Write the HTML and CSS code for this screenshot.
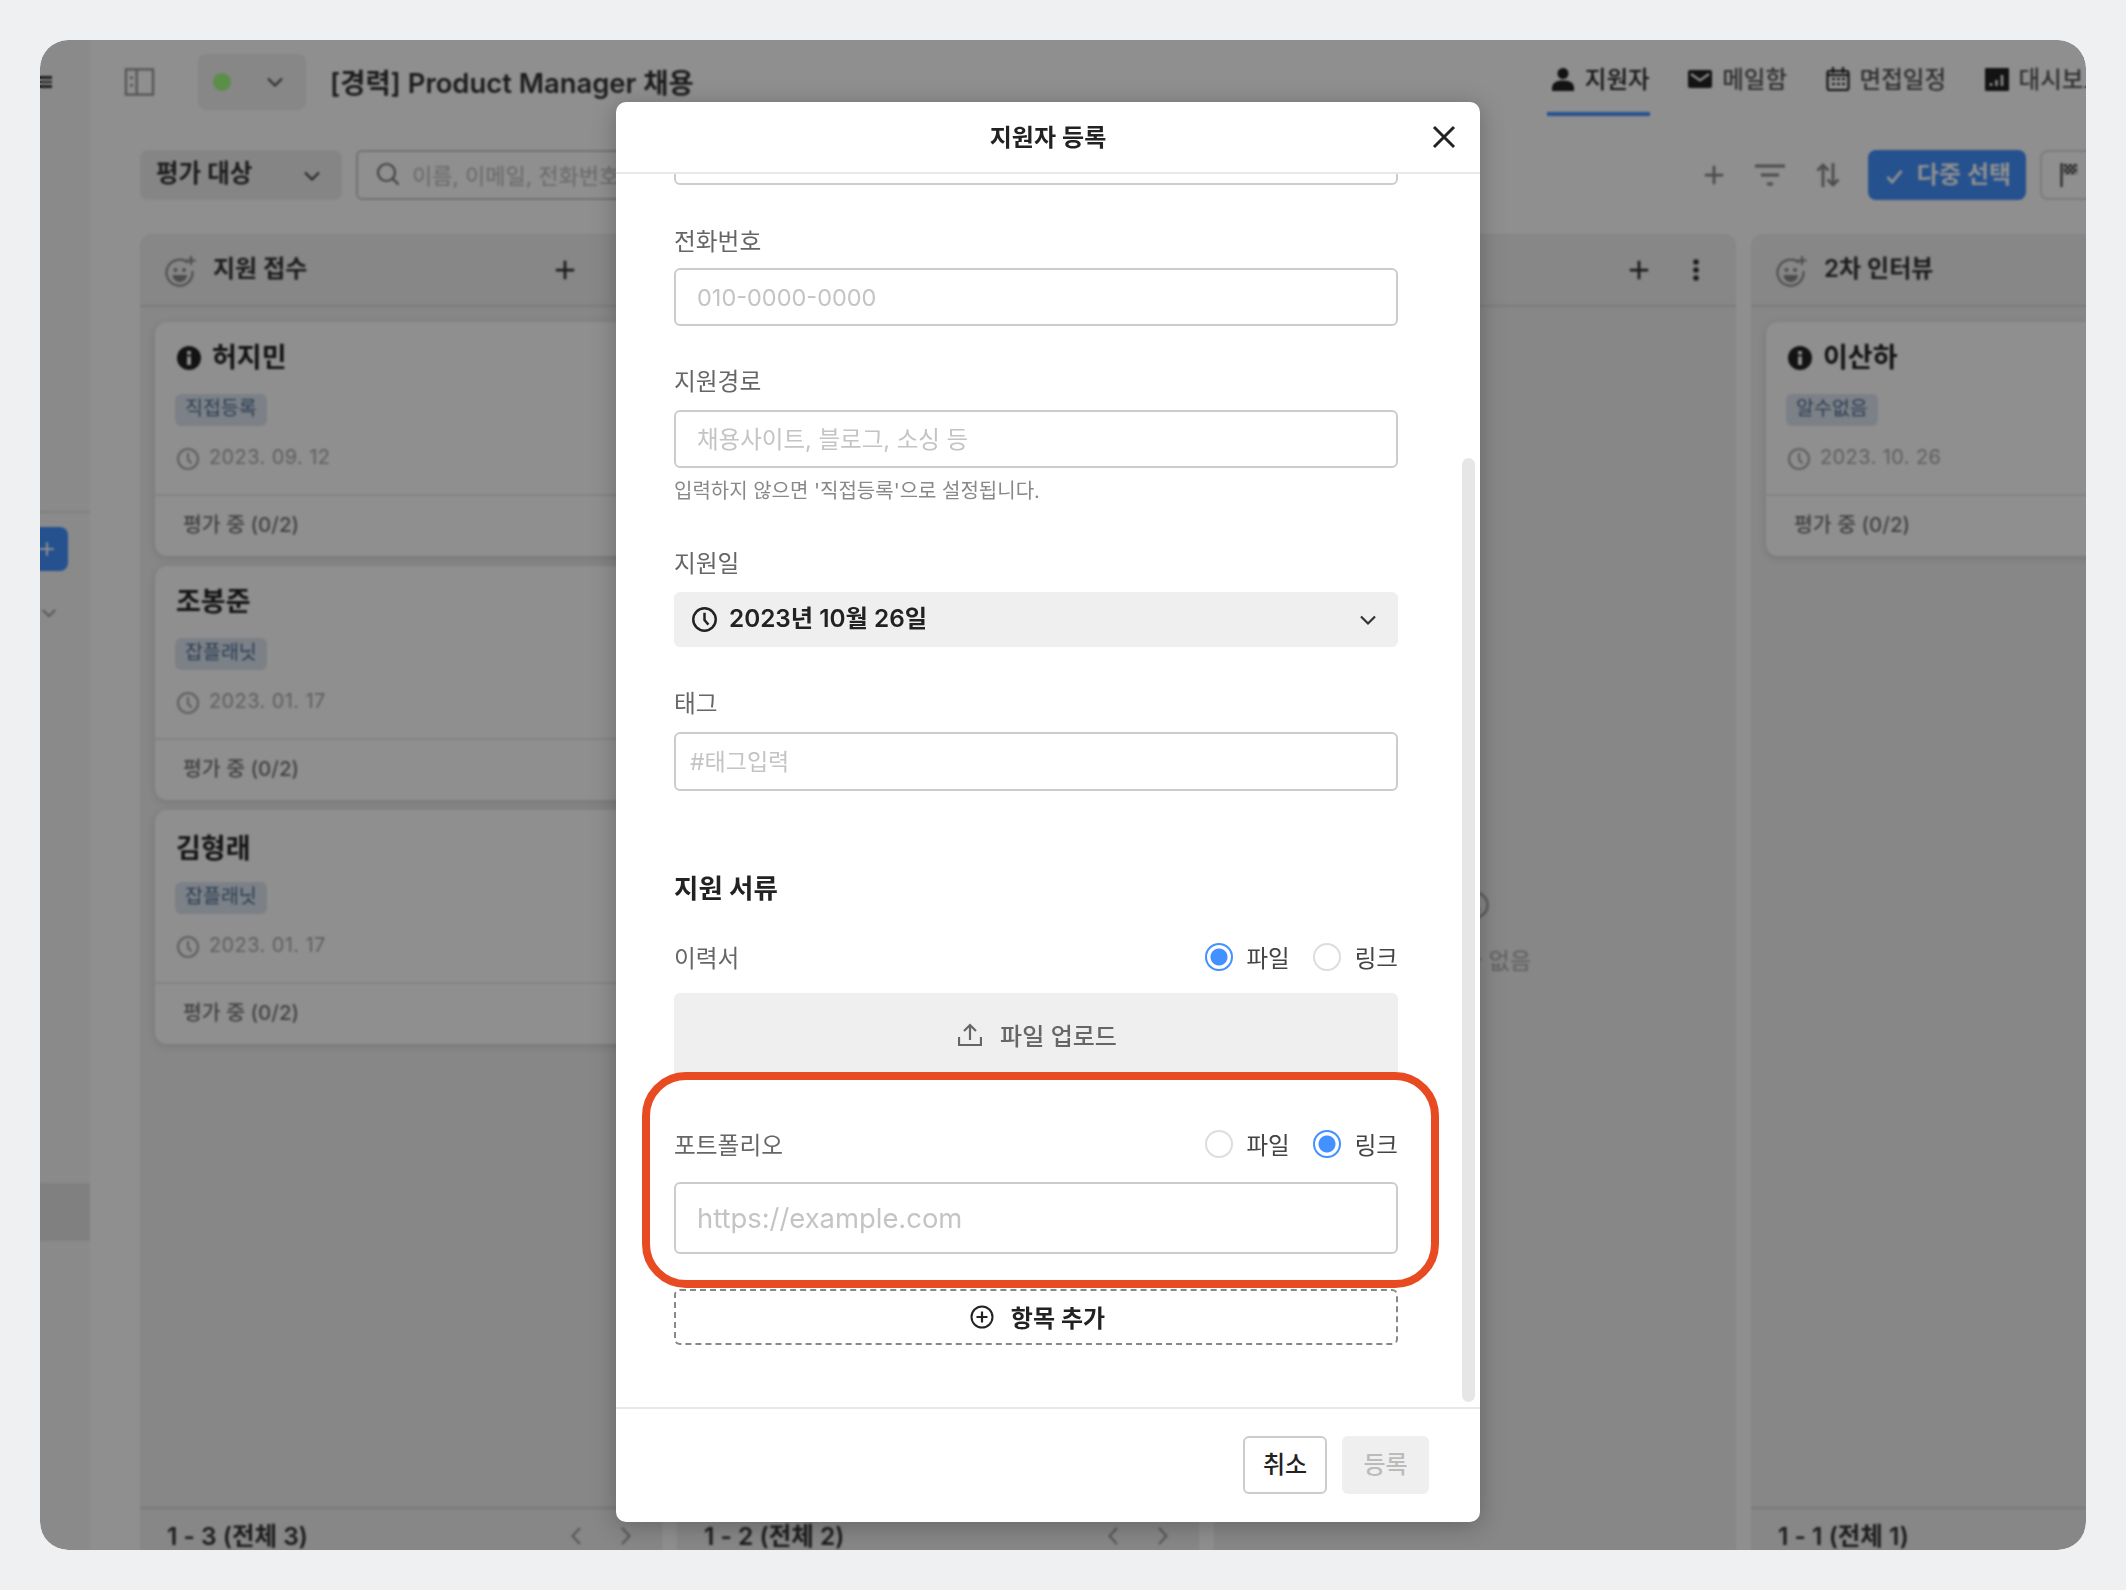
FILE: index.html
```html
<!DOCTYPE html>
<html lang="ko">
<head>
    <meta charset="UTF-8">
    <title>지원자 등록</title>
    <link rel="stylesheet" href="styles.css">
</head>
<body>
    <!-- icones reutilisees -->
    <svg class="sprite" width="0" height="0">
        <symbol id="i-chevron" viewBox="0 0 20 20"><path d="M3 6.500l7 7 7-7" fill="none" stroke="currentColor" stroke-width="2.200"/></symbol>
        <symbol id="i-plus" viewBox="0 0 24 24"><path d="M12 2v20M2 12h20" fill="none" stroke="currentColor" stroke-width="3"/></symbol>
        <symbol id="i-dots" viewBox="0 0 24 24"><circle cx="12" cy="4" r="2.800" fill="currentColor"/><circle cx="12" cy="12" r="2.800" fill="currentColor"/><circle cx="12" cy="20" r="2.800" fill="currentColor"/></symbol>
        <symbol id="i-clock" viewBox="0 0 24 24"><circle cx="12" cy="12" r="10" fill="none" stroke="currentColor" stroke-width="2.200"/><path d="M12 6v6.500l3.500 4" fill="none" stroke="currentColor" stroke-width="2.200"/></symbol>
        <symbol id="i-info" viewBox="0 0 24 24"><circle cx="12" cy="12" r="12" fill="currentColor"/><rect x="10" y="5" width="4" height="3.600" fill="#fff"/><rect x="10" y="10.400" width="4" height="8.600" fill="#fff"/></symbol>
        <symbol id="i-smile" viewBox="0 0 32 32"><path d="M24 6.800A13 13 0 1 0 28.400 15" fill="none" stroke="currentColor" stroke-width="2"/><circle cx="11.500" cy="14" r="2" fill="currentColor"/><circle cx="20" cy="14" r="2" fill="currentColor"/><path d="M8.500 19h14.500a7.200 7.200 0 0 1-14.500 0z" fill="currentColor"/><path d="M27 0v9M22.500 4.500h9" fill="none" stroke="currentColor" stroke-width="2"/></symbol>
        <symbol id="i-prev" viewBox="0 0 12 20"><path d="M10 2L2.500 10 10 18" fill="none" stroke="currentColor" stroke-width="2"/></symbol>
        <symbol id="i-next" viewBox="0 0 12 20"><path d="M2 2l7.500 8L2 18" fill="none" stroke="currentColor" stroke-width="2"/></symbol>
    </svg>

    <div class="window">
        <aside class="sidebar">
            <div class="menu-lines"></div>
            <div class="side-line"></div>
            <button class="side-add"><svg class="side-plus"><use href="#i-plus"/></svg></button>
            <svg class="side-chevron"><use href="#i-chevron"/></svg>
            <div class="side-active"></div>
        </aside>

        <main class="main">
            <div class="topbar">
                <svg class="panel-icon" viewBox="0 0 32 30">
                    <rect x="1.500" y="1.500" width="29" height="27" fill="none" stroke="currentColor" stroke-width="2.500"/>
                    <path d="M13 1.500v27" stroke="currentColor" stroke-width="2.500"/>
                    <rect x="6" y="9" width="3" height="3" fill="currentColor"/>
                    <rect x="6" y="17" width="3" height="3" fill="currentColor"/>
                </svg>
                <div class="status-pill">
                    <span class="status-dot"></span>
                    <svg class="pill-chevron"><use href="#i-chevron"/></svg>
                </div>
                <h1 class="job-title">[경력] Product Manager 채용</h1>
                <nav class="tabs">
                    <a class="tab tab-active">
                        <svg class="tab-icon" viewBox="0 0 24 24"><circle cx="12" cy="6.500" r="5.500" fill="currentColor"/><path d="M1 24v-3c0-5 4-7.500 11-7.500s11 2.500 11 7.500v3z" fill="currentColor"/></svg>
                        지원자
                    </a>
                    <a class="tab">
                        <svg class="tab-icon" viewBox="0 0 24 24"><rect y="3" width="24" height="18" rx="2" fill="currentColor"/><path d="M3 7l9 6.500L21 7" fill="none" stroke="#fff" stroke-width="2.200"/></svg>
                        메일함
                    </a>
                    <a class="tab">
                        <svg class="tab-icon" viewBox="0 0 24 24"><rect x="1.500" y="4" width="21" height="19" rx="2" fill="none" stroke="currentColor" stroke-width="2.200"/><path d="M7 0v6M17 0v6M1.500 8h21" stroke="currentColor" stroke-width="2.200"/><path d="M6 12h3M11 12h3M16 12h3M6 17h3M11 17h3M16 17h3" stroke="currentColor" stroke-width="2"/></svg>
                        면접일정
                    </a>
                    <a class="tab">
                        <svg class="tab-icon" viewBox="0 0 24 24"><rect y="1" width="24" height="23" rx="1" fill="currentColor"/><path d="M6 19v-3M11.500 19v-6M17 19V8" stroke="#fff" stroke-width="2.500"/></svg>
                        대시보드
                    </a>
                </nav>
            </div>

            <div class="toolbar">
                <div class="select-filter">평가 대상 <svg class="select-chevron"><use href="#i-chevron"/></svg></div>
                <div class="search-box">
                    <svg class="search-icon" viewBox="0 0 24 24"><circle cx="10.500" cy="10.500" r="8.500" fill="none" stroke="currentColor" stroke-width="2.200"/><path d="M16.500 16.500l6 6" stroke="currentColor" stroke-width="2.200"/></svg>
                    <span class="search-text">이름, 이메일, 전화번호</span>
                </div>
                <div class="tools">
                    <svg class="tool-plus"><use href="#i-plus"/></svg>
                    <svg class="tool-icon" viewBox="0 0 30 24"><path d="M0 3h30M6 12h18M12 21h6" stroke="currentColor" stroke-width="3.200"/></svg>
                    <svg class="tool-sort" viewBox="0 0 24 24"><path d="M7 24V2M1.500 7.500L7 2l5.500 5.500M17 0v22M11.500 16.500L17 22l5.500-5.500" fill="none" stroke="currentColor" stroke-width="2.800"/></svg>
                    <button class="btn-multi">
                        <svg class="check" viewBox="0 0 18 16"><path d="M1.500 8.500l5 5.500L16.500 2" fill="none" stroke="currentColor" stroke-width="3"/></svg>
                        다중 선택
                    </button>
                    <button class="btn-flag">
                        <svg class="flag" viewBox="0 0 18 24">
                            <path d="M1.500 0v24" stroke="currentColor" stroke-width="2"/>
                            <path d="M3 1h15v11H3z" fill="currentColor" opacity=".2"/>
                            <path d="M4 1h2.500v2.500H4zM9 1h2.500v2.500H9zM14 1h2.500v2.500H14zM6.500 3.500H9V6H6.500zM11.500 3.500H14V6h-2.500zM4 6h2.500v2.500H4zM9 6h2.500v2.500H9zM14 6h2.500v2.500H14zM6.500 8.500H9V11H6.500zM11.500 8.500H14V11h-2.500z" fill="currentColor"/>
                        </svg>
                    </button>
                </div>
            </div>

            <div class="board">
                <section class="column">
                    <header class="col-head">
                        <svg class="col-smile"><use href="#i-smile"/></svg>
                        <span class="col-title">지원 접수</span>
                        <svg class="col-plus"><use href="#i-plus"/></svg>
                        <svg class="col-dots"><use href="#i-dots"/></svg>
                    </header>
                    <div class="col-body">
                        <article class="card">
                            <div class="card-name"><svg class="info"><use href="#i-info"/></svg>허지민</div>
                            <span class="tag">직접등록</span>
                            <div class="card-date"><svg class="date-clock"><use href="#i-clock"/></svg>2023. 09. 12</div>
                            <div class="card-foot">평가 중 (0/2)</div>
                        </article>
                        <article class="card">
                            <div class="card-name">조봉준</div>
                            <span class="tag">잡플래닛</span>
                            <div class="card-date"><svg class="date-clock"><use href="#i-clock"/></svg>2023. 01. 17</div>
                            <div class="card-foot">평가 중 (0/2)</div>
                        </article>
                        <article class="card">
                            <div class="card-name">김형래</div>
                            <span class="tag">잡플래닛</span>
                            <div class="card-date"><svg class="date-clock"><use href="#i-clock"/></svg>2023. 01. 17</div>
                            <div class="card-foot">평가 중 (0/2)</div>
                        </article>
                    </div>
                    <footer class="col-foot">
                        <span>1 - 3 (전체 3)</span>
                        <svg class="pager"><use href="#i-prev"/></svg>
                        <svg class="pager"><use href="#i-next"/></svg>
                    </footer>
                </section>

                <section class="column">
                    <header class="col-head">
                        <svg class="col-plus"><use href="#i-plus"/></svg>
                        <svg class="col-dots"><use href="#i-dots"/></svg>
                    </header>
                    <div class="col-body"></div>
                    <footer class="col-foot">
                        <span>1 - 2 (전체 2)</span>
                        <svg class="pager"><use href="#i-prev"/></svg>
                        <svg class="pager"><use href="#i-next"/></svg>
                    </footer>
                </section>

                <section class="column">
                    <header class="col-head">
                        <svg class="col-plus"><use href="#i-plus"/></svg>
                        <svg class="col-dots"><use href="#i-dots"/></svg>
                    </header>
                    <div class="col-body col-empty">
                        <svg class="empty-icon"><use href="#i-clock"/></svg>
                        <span>지원자 없음</span>
                    </div>
                </section>

                <section class="column">
                    <header class="col-head">
                        <svg class="col-smile"><use href="#i-smile"/></svg>
                        <span class="col-title">2차 인터뷰</span>
                    </header>
                    <div class="col-body">
                        <article class="card">
                            <div class="card-name"><svg class="info"><use href="#i-info"/></svg>이산하</div>
                            <span class="tag">알수없음</span>
                            <div class="card-date"><svg class="date-clock"><use href="#i-clock"/></svg>2023. 10. 26</div>
                            <div class="card-foot">평가 중 (0/2)</div>
                        </article>
                    </div>
                    <footer class="col-foot">
                        <span>1 - 1 (전체 1)</span>
                    </footer>
                </section>
            </div>
        </main>

        <div class="overlay"></div>

        <!-- fenetre d'inscription -->
        <div class="modal">
            <header class="modal-head">
                <h2>지원자 등록</h2>
                <svg class="modal-close" viewBox="0 0 24 24"><path d="M2 2l20 20M22 2L2 22" stroke="currentColor" stroke-width="3"/></svg>
            </header>
            <div class="modal-body">
                <input class="field-input first-input" type="text">

                <label class="field-label label-phone">전화번호</label>
                <input class="field-input" type="text" placeholder="010-0000-0000">

                <label class="field-label">지원경로</label>
                <input class="field-input" type="text" placeholder="채용사이트, 블로그, 소싱 등">
                <p class="hint">입력하지 않으면 '직접등록'으로 설정됩니다.</p>

                <label class="field-label label-date">지원일</label>
                <div class="date-field">
                    <svg class="date-icon"><use href="#i-clock"/></svg>
                    <span class="date-text">2023년 10월 26일</span>
                    <svg class="date-chevron"><use href="#i-chevron"/></svg>
                </div>

                <label class="field-label label-tag">태그</label>
                <input class="field-input tag-input" type="text" placeholder="#태그입력">

                <h3 class="section-title">지원 서류</h3>

                <div class="doc-row">
                    <span class="doc-label">이력서</span>
                    <label class="radio"><input type="radio" name="resume" checked>파일</label>
                    <label class="radio"><input type="radio" name="resume">링크</label>
                </div>
                <button class="upload">
                    <svg class="upload-icon" viewBox="0 0 24 24"><path d="M12 17V2M6 8l6-6 6 6M1 14v8h22v-8" fill="none" stroke="currentColor" stroke-width="2.200"/></svg>
                    파일 업로드
                </button>

                <div class="doc-row row-portfolio">
                    <span class="doc-label">포트폴리오</span>
                    <label class="radio"><input type="radio" name="portfolio">파일</label>
                    <label class="radio"><input type="radio" name="portfolio" checked>링크</label>
                </div>
                <input class="field-input url-input" type="text" placeholder="https://example.com">

                <button class="add-item">
                    <svg class="add-icon" viewBox="0 0 24 24"><circle cx="12" cy="12" r="10.500" fill="none" stroke="currentColor" stroke-width="2"/><path d="M12 6.500v11M6.500 12h11" stroke="currentColor" stroke-width="2.200"/></svg>
                    항목 추가
                </button>
            </div>
            <div class="scroll-thumb"></div>
            <footer class="modal-foot">
                <button class="btn-cancel">취소</button>
                <button class="btn-submit">등록</button>
            </footer>
            <div class="highlight"></div>
        </div>
    </div>
</body>
</html>
```

FILE: styles.css
```css
* {
    box-sizing: border-box;
}

body {
    margin: 0;
    padding: 40px;
    background: #eff0f2;
    font-family: Inter, "Noto Sans CJK KR", sans-serif;
    color: #333;
}

button {
    font-family: inherit;
    border: none;
    padding: 0;
}

svg {
    flex-shrink: 0;
    display: block;
}

.sprite {
    position: absolute;
}

.window {
    position: relative;
    display: flex;
    width: 2046px;
    height: 1510px;
    border-radius: 28px;
    overflow: hidden;
    background: #fff;
    filter: blur(0.5px);
}

.overlay {
    position: absolute;
    inset: 0;
    background: rgba(0, 0, 0, 0.44);
    backdrop-filter: blur(0.8px);
}

/* barre laterale */
.sidebar {
    width: 50px;
    flex-shrink: 0;
    background: #f7f7f7;
    display: flex;
    flex-direction: column;
}

.menu-lines {
    width: 12px;
    height: 12px;
    margin-top: 36px;
    border-top: 3px solid #333;
    border-bottom: 3px solid #333;
}

.menu-lines::after {
    content: "";
    display: block;
    height: 2px;
    margin-top: 2px;
    background: #333;
}

.side-line {
    height: 2px;
    margin-top: 423px;
    background: #e4e4e4;
}

.side-add {
    width: 28px;
    height: 44px;
    margin-top: 14px;
    border-radius: 0 8px 8px 0;
    background: #4291ff;
    color: #fff;
    display: flex;
    align-items: center;
}

.side-plus {
    width: 16px;
    height: 16px;
    margin-left: -1px;
}

.side-chevron {
    width: 18px;
    height: 18px;
    margin-top: 33px;
    color: #999;
}

.side-active {
    height: 58px;
    margin-top: 561px;
    background: #e5e5e5;
}

/* contenu principal */
.main {
    flex: 1;
    min-width: 0;
    display: flex;
    flex-direction: column;
    background: #fff;
}

.topbar {
    display: flex;
    align-items: center;
    height: 76px;
    padding-top: 8px;
    padding-left: 34px;
    margin-right: -19px;
    flex-shrink: 0;
}

.panel-icon {
    width: 31px;
    height: 28px;
    color: #999;
}

.status-pill {
    width: 108px;
    height: 56px;
    margin-left: 43px;
    border-radius: 8px;
    background: #f0f0f0;
    display: flex;
    align-items: center;
    padding-left: 15px;
}

.status-dot {
    width: 18px;
    height: 18px;
    border-radius: 50%;
    background: #a0ff80;
}

.pill-chevron {
    width: 20px;
    height: 20px;
    margin-left: 34px;
    color: #555;
}

.job-title {
    flex: 1;
    margin: 0 0 3px 24px;
    font-size: 27.400px;
    font-weight: 600;
    color: #333;
}

.tabs {
    align-self: flex-end;
    display: flex;
    gap: 38.500px;
    flex-shrink: 0;
}

.tab {
    height: 63px;
    padding-top: 12px;
    display: flex;
    align-items: flex-start;
    gap: 10px;
    font-size: 23.500px;
    font-weight: 500;
    line-height: 30px;
    color: #555;
}

.tab-icon {
    width: 24px;
    height: 24px;
    margin-top: 2px;
    color: #222;
}

.tab-active {
    padding-left: 4px;
    color: #222;
    border-bottom: 4px solid #4291ff;
}

.toolbar {
    display: flex;
    align-items: center;
    height: 50px;
    margin-top: 34px;
    padding-left: 50px;
    margin-right: -30px;
    flex-shrink: 0;
}

.select-filter {
    width: 202px;
    height: 50px;
    padding: 0 20px 8px 16px;
    border-radius: 8px;
    background: #eee;
    display: flex;
    align-items: center;
    justify-content: space-between;
    font-size: 24.500px;
    font-weight: 600;
    color: #333;
}

.select-chevron {
    width: 20px;
    height: 20px;
    margin-top: 10px;
    color: #444;
}

.search-box {
    width: 400px;
    height: 50px;
    margin-left: 14px;
    padding-left: 18px;
    padding-bottom: 2px;
    border: 2px solid #ccc;
    border-radius: 6px;
    display: flex;
    align-items: center;
    gap: 12px;
}

.search-icon {
    width: 24px;
    height: 24px;
    color: #777;
}

.search-text {
    font-size: 22px;
    color: #bbb;
    white-space: nowrap;
}

.tools {
    margin-left: auto;
    display: flex;
    align-items: center;
}

.tool-plus {
    width: 22px;
    height: 22px;
    color: #888;
}

.tool-icon {
    width: 30px;
    height: 24px;
    margin-left: 30px;
    color: #888;
}

.tool-sort {
    width: 24px;
    height: 26px;
    margin-left: 31px;
    color: #888;
}

.btn-multi {
    width: 158px;
    height: 50px;
    margin-left: 28px;
    padding-bottom: 6px;
    padding-left: 3px;
    border-radius: 8px;
    background: #4291ff;
    color: #fff;
    font-size: 24px;
    font-weight: 600;
    display: flex;
    align-items: center;
    justify-content: center;
    gap: 14px;
}

.check {
    width: 17px;
    height: 15px;
    margin-top: 9px;
}

.btn-flag {
    width: 76px;
    height: 50px;
    margin-left: 14px;
    border: 2px solid #ddd;
    border-radius: 8px;
    background: #fff;
    color: #333;
    padding-left: 18px;
}

.flag {
    width: 18px;
    height: 24px;
}

/* colonnes */
.board {
    flex: 1;
    min-height: 0;
    display: flex;
    gap: 15px;
    margin-top: 34px;
    padding-left: 50px;
}

.column {
    width: 522px;
    flex-shrink: 0;
    border-radius: 12px 12px 0 0;
    background: #f0f0f0;
    display: flex;
    flex-direction: column;
}

.col-head {
    height: 73px;
    flex-shrink: 0;
    padding: 0 28px 0 24px;
    border-bottom: 2px solid #dcdcdc;
    display: flex;
    align-items: center;
}

.col-smile {
    width: 32px;
    height: 32px;
    margin-top: 4px;
    color: #888;
}

.col-title {
    margin-left: 17px;
    margin-bottom: 7px;
    font-size: 24px;
    font-weight: 600;
    color: #333;
}

.col-plus {
    width: 22px;
    height: 22px;
    margin-left: auto;
    color: #333;
}

.col-dots {
    width: 24px;
    height: 24px;
    margin-left: 34px;
    color: #333;
}

.col-body {
    flex: 1;
    min-height: 0;
    padding: 15px 15px 0;
    display: flex;
    flex-direction: column;
    gap: 10px;
}

.col-empty {
    align-items: center;
    justify-content: center;
    gap: 22px;
    padding-top: 9px;
    font-size: 23px;
    color: #aaa;
}

.empty-icon {
    width: 30px;
    height: 30px;
}

.card {
    height: 234px;
    flex-shrink: 0;
    border-radius: 12px;
    background: #fff;
    box-shadow: 0 2px 8px rgba(0, 0, 0, 0.12);
    padding: 20px 0 0 21px;
    display: flex;
    flex-direction: column;
    align-items: flex-start;
}

.card-name {
    height: 32px;
    display: flex;
    align-items: center;
    font-size: 27px;
    font-weight: 700;
    line-height: 32px;
    color: #222;
}

.info {
    width: 24px;
    height: 24px;
    margin: 0 11px 0 1px;
}

.tag {
    height: 32px;
    margin-top: 20px;
    margin-left: -1px;
    padding: 0 10px;
    border-radius: 6px;
    background: #dde6f0;
    color: #4d6c94;
    font-size: 19.500px;
    line-height: 28px;
}

.card-date {
    height: 30px;
    margin-top: 16px;
    display: flex;
    align-items: center;
    font-size: 20px;
    color: #aaa;
    letter-spacing: 0.4px;
}

.date-clock {
    width: 24px;
    height: 24px;
    margin: 4px 9px 0 0;
    color: #aaa;
}

.card-foot {
    width: calc(100% + 21px);
    margin-top: 22px;
    margin-left: -21px;
    padding: 14px 0 0 28px;
    border-top: 2px solid #e9e9e9;
    font-size: 20.500px;
    font-weight: 500;
    line-height: 30px;
    color: #777;
}

/* le nom de la 3e carte est un peu plus bas */
.card:nth-child(3) .card-name {
    margin-top: 3px;
}

.card:nth-child(3) .tag {
    margin-top: 17px;
}

.col-foot {
    height: 43px;
    flex-shrink: 0;
    padding: 11px 30px 0 27px;
    border-top: 2px solid #d8d8d8;
    display: flex;
    align-items: flex-start;
    font-size: 24.500px;
    font-weight: 600;
    line-height: 32px;
    color: #333;
}

.col-foot span {
    margin-right: auto;
}

.pager {
    width: 12px;
    height: 20px;
    margin-top: 6px;
    margin-left: 38px;
    color: #999;
}

/* fenetre modale */
.modal {
    position: absolute;
    left: 576px;
    top: 62px;
    width: 864px;
    height: 1420px;
    border-radius: 10px;
    background: #fff;
    box-shadow: 0 4px 24px rgba(0, 0, 0, 0.25);
    display: flex;
    flex-direction: column;
}

.modal-head {
    height: 72px;
    flex-shrink: 0;
    border-bottom: 2px solid #e8e8e8;
    display: flex;
    align-items: center;
    justify-content: center;
    position: relative;
}

.modal-head h2 {
    margin: 0 0 4px;
    font-size: 24px;
    font-weight: 600;
    color: #222;
}

.modal-close {
    position: absolute;
    right: 24px;
    top: 23px;
    width: 24px;
    height: 24px;
    color: #222;
}

.modal-body {
    flex: 1;
    min-height: 0;
    overflow: hidden;
    padding: 0 82px 0 58px;
    display: flex;
    flex-direction: column;
}

.field-input {
    width: 724px;
    height: 58px;
    flex-shrink: 0;
    padding: 0 21px;
    border: 2px solid #ccc;
    border-radius: 6px;
    font-family: inherit;
    font-size: 23.500px;
    background: #fff;
}

.field-input::placeholder {
    color: #c4c4c4;
}

.first-input {
    margin-top: -47px;
}

.field-label {
    margin-top: 41px;
    margin-bottom: 13px;
    font-size: 23.700px;
    line-height: 30px;
    color: #666;
}

.label-phone {
    margin-top: 42px;
    margin-bottom: 11px;
}

.hint {
    margin: 11px 0 0;
    font-size: 20px;
    line-height: 24px;
    color: #888;
}

.label-date {
    margin-top: 46px;
}

.label-tag {
    margin-top: 42px;
}

.date-field {
    width: 724px;
    height: 55px;
    flex-shrink: 0;
    padding: 0 20px 0 17px;
    border-radius: 6px;
    background: #efefef;
    display: flex;
    align-items: center;
    font-size: 24.300px;
    font-weight: 600;
    color: #222;
}

.date-icon {
    width: 27px;
    height: 27px;
    margin-right: 11px;
}

.date-text {
    margin-bottom: 7px;
}

.date-chevron {
    width: 20px;
    height: 20px;
    margin-left: auto;
    color: #333;
}

.tag-input {
    height: 59px;
    padding: 0 14px;
    font-size: 23px;
}

.section-title {
    margin: 79px 0 0;
    font-size: 26.500px;
    font-weight: 700;
    line-height: 36px;
    color: #222;
}

.doc-row {
    flex-shrink: 0;
    height: 30px;
    margin-top: 36px;
    display: flex;
    align-items: center;
    justify-content: flex-end;
    gap: 23px;
}

.doc-label {
    margin-right: auto;
    font-size: 23.700px;
    color: #666;
}

.radio {
    display: flex;
    align-items: center;
    gap: 14px;
    font-size: 23.500px;
    color: #444;
}

.radio input {
    appearance: none;
    width: 28px;
    height: 28px;
    margin: 0;
    border: 2px solid #ddd;
    border-radius: 50%;
    background: #fff;
}

.radio input:checked {
    border-color: #4291ff;
    background: radial-gradient(circle, #4291ff 0 8px, #fff 9px);
}

.upload {
    width: 724px;
    height: 81px;
    flex-shrink: 0;
    margin-top: 21px;
    padding: 2px 0 0 3px;
    border-radius: 6px 6px 0 0;
    background: #efefef;
    color: #666;
    font-size: 24px;
    font-weight: 500;
    display: flex;
    align-items: center;
    justify-content: center;
    gap: 18px;
}

.upload-icon {
    width: 24px;
    height: 24px;
}

.row-portfolio {
    margin-top: 55px;
}

.url-input {
    height: 72px;
    margin-top: 23px;
    font-size: 27.400px;
}

.add-item {
    width: 724px;
    height: 56px;
    flex-shrink: 0;
    margin-top: 35px;
    padding: 0 0 1px 3px;
    border: 2px dashed #888;
    border-radius: 6px;
    background: #fff;
    color: #222;
    font-size: 24px;
    font-weight: 600;
    display: flex;
    align-items: center;
    justify-content: center;
    gap: 17px;
}

.add-icon {
    width: 24px;
    height: 24px;
}

.scroll-thumb {
    position: absolute;
    left: 846px;
    top: 356px;
    width: 13px;
    height: 944px;
    border-radius: 7px;
    background: #e6e6e6;
}

.modal-foot {
    height: 115px;
    flex-shrink: 0;
    border-top: 2px solid #e8e8e8;
    padding: 27px 51px 0 0;
    display: flex;
    justify-content: flex-end;
    gap: 15px;
}

.btn-cancel,
.btn-submit {
    height: 58px;
    padding-bottom: 5px;
    border-radius: 6px;
    font-size: 24px;
    font-weight: 500;
}

.btn-cancel {
    width: 84px;
    border: 2px solid #ccc;
    background: #fff;
    color: #222;
}

.btn-submit {
    width: 87px;
    background: #efefef;
    color: #bbb;
}

/* encadre rouge d'annotation */
.highlight {
    position: absolute;
    left: 26px;
    top: 970px;
    width: 797px;
    height: 216px;
    border: 8px solid #e84a22;
    border-radius: 44px;
}
```
